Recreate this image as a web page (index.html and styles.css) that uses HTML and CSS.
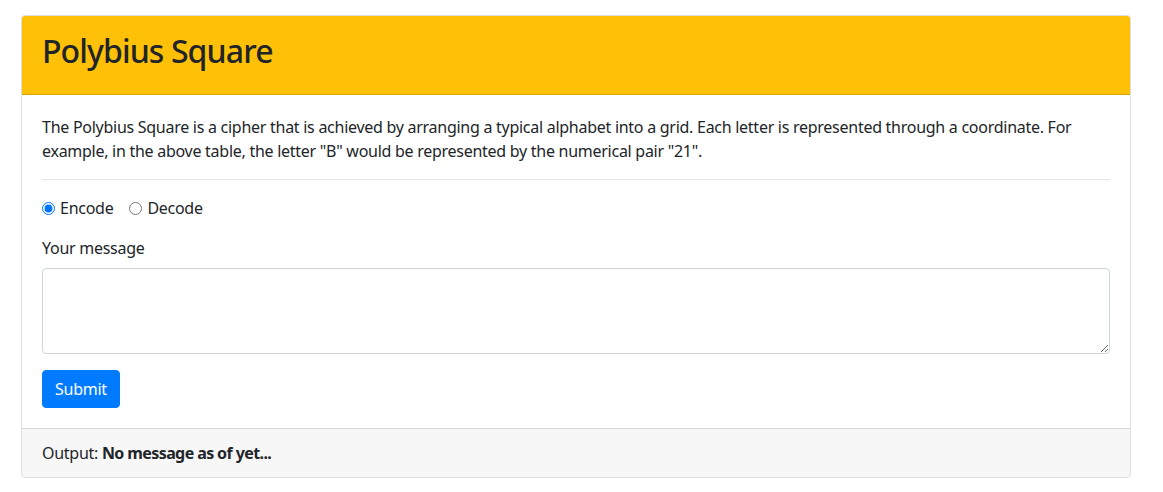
FILE: index.html
```html
<!DOCTYPE html>
<html lang="en">
<head>
<meta charset="utf-8">
<title>Polybius Square</title>
<link rel="stylesheet" href="styles.css">
</head>
<body>
<div class="container">
  <div class="card">
    <div class="card-header">
      <h2 class="title">Polybius Square</h2>
    </div>
    <div class="card-body">
      <p class="intro">The Polybius Square is a cipher that is achieved by arranging a typical alphabet into a grid. Each letter is represented through a coordinate. For example, in the above table, the letter "B" would be represented by the numerical pair "21".</p>
      <hr class="divider">
      <form class="form">
        <div class="form-group modes">
          <label class="check"><input type="radio" name="mode" checked> Encode</label>
          <label class="check"><input type="radio" name="mode"> Decode</label>
        </div>
        <div class="form-group">
          <label class="field-label" for="msg">Your message</label>
          <textarea id="msg" class="input" rows="3"></textarea>
        </div>
        <button type="button" class="btn">Submit</button>
      </form>
    </div>
    <div class="card-footer">Output: <strong>No message as of yet...</strong></div>
  </div>
</div>
</body>
</html>
```
FILE: styles.css
```css
* { box-sizing: border-box; }
body {
  margin: 0;
  font-family: "Segoe UI", "Noto Sans", sans-serif;
  font-size: 16px;
  line-height: 1.5;
  letter-spacing: -0.27px;
  color: #212529;
  background: #fff;
}
.container {
  width: 1140px;
  padding: 15px 15px 0 21px;
}
.card {
  width: 1110px;
  border: 1px solid rgba(0,0,0,.125);
  border-radius: 4px;
  background: #fff;
  overflow: hidden;
}
.card-header {
  background: #ffc107;
  padding: 16px 20px;
  border-bottom: 1px solid rgba(0,0,0,.125);
}
.title {
  margin: 0 0 8px;
  font-size: 32px;
  font-weight: 500;
  line-height: 1.2;
  letter-spacing: -0.9px;
}
.card-body { padding: 20px; }
.intro { margin: 0 0 16px; }
.divider {
  margin: 0 0 16px;
  border: 0;
  border-top: 1px solid rgba(0,0,0,.1);
}
.form { margin: 0; }
.form-group { margin-bottom: 16px; }
.modes { display: flex; align-items: center; }
.check {
  display: inline-flex;
  align-items: center;
  margin-right: 16px;
}
.check input { margin: 0 5px 0 0; width: 13px; height: 13px; }
.field-label { display: block; margin-bottom: 8px; }
.input {
  display: block;
  width: 100%;
  height: 86px;
  padding: 6px 12px;
  font: inherit;
  color: #495057;
  border: 1px solid #ced4da;
  border-radius: 4px;
}
.btn {
  display: block;
  font: inherit;
  letter-spacing: -0.27px;
  color: #fff;
  background: #007bff;
  border: 1px solid #007bff;
  border-radius: 4px;
  padding: 6px 12px;
  height: 38px;
}
.card-footer {
  background: #f7f7f7;
  border-top: 1px solid rgba(0,0,0,.125);
  padding: 12px 20px;
}
.card-footer strong { font-weight: 700; letter-spacing: -0.6px; }
```
